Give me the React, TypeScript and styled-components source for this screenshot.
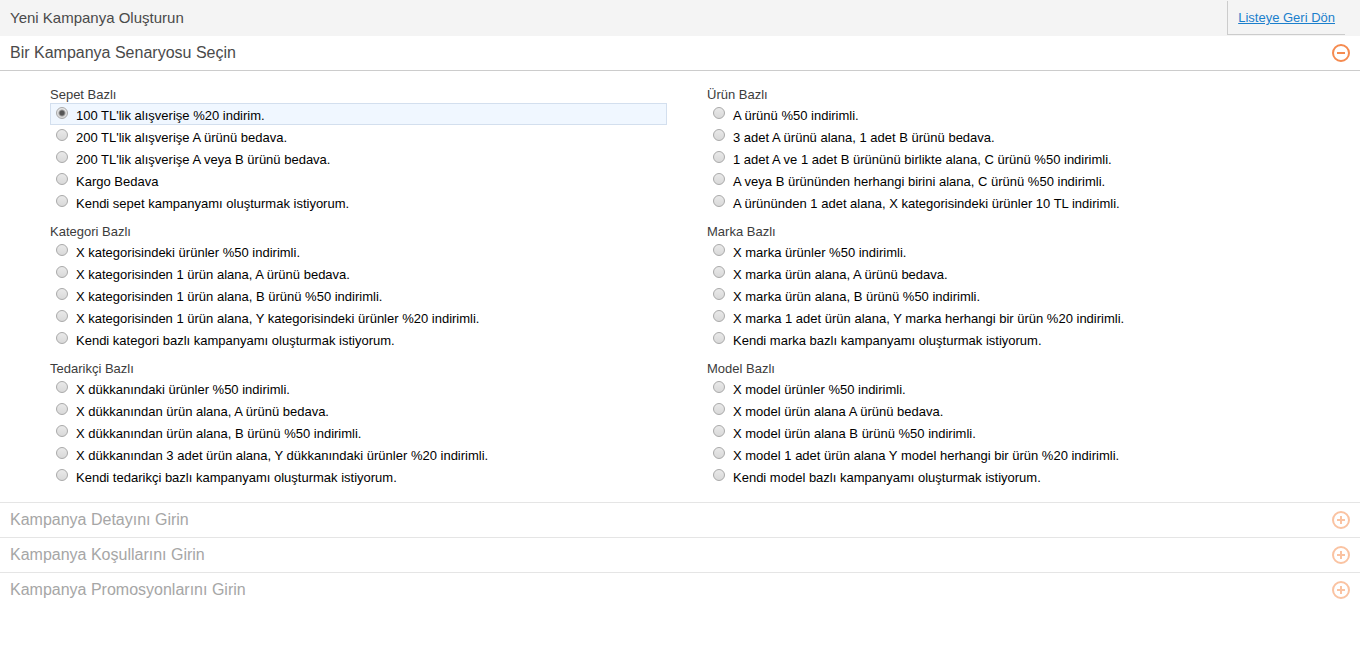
import React, { useState } from "react";
import styled, { createGlobalStyle } from "styled-components";

const GlobalStyle = createGlobalStyle`
  *, *::before, *::after { box-sizing: border-box; }
  body {
    margin: 0;
    background: #fff;
    color: #000;
    font-family: "Liberation Sans", Arial, sans-serif;
    font-size: 13px;
  }
`;

const TopBar = styled.header`
  display: flex;
  justify-content: space-between;
  align-items: flex-start;
  height: 36px;
  padding: 1px 15px 0 10px;
  background: #f4f4f4;
`;

const PageTitle = styled.h1`
  margin: 0;
  font-size: 15px;
  line-height: 34px;
  font-weight: normal;
  color: #4a4a4a;
`;

const BackBox = styled.div`
  height: 34px;
  padding: 0 10px;
  border-left: 1px solid #ccc;
  border-bottom: 1px solid #ccc;
`;

const BackLink = styled.a`
  font-size: 13px;
  line-height: 34px;
  color: #1b7fcc;
`;

const SectionHeader = styled.button<{ $open: boolean }>`
  display: flex;
  justify-content: space-between;
  align-items: center;
  width: 100%;
  height: 35px;
  padding: 0 10px;
  border: 0;
  border-bottom: ${(p) => (p.$open ? "1px solid #ccc" : "0")};
  border-top: ${(p) => (p.$open ? "0" : "1px solid #e5e5e5")};
  background: #fff;
  font-family: inherit;
  font-size: 16px;
  color: ${(p) => (p.$open ? "#4a4a4a" : "#a6a6a6")};
  text-align: left;
  cursor: pointer;
`;

const SectionTitle = styled.span`
  padding-bottom: 1px;
  line-height: 33px;
`;

const ToggleSvg = styled.svg<{ $open: boolean }>`
  flex: none;
  stroke: ${(p) => (p.$open ? "#f58b50" : "#fac3a2")};
`;

const Scenarios = styled.div`
  display: grid;
  grid-template-columns: 1fr 1fr;
  column-gap: 40px;
  padding: 5px 36px 15px 50px;
`;

const Group = styled.fieldset`
  min-width: 0;
  margin: 0;
  padding: 0;
  border: 0;
`;

const GroupTitle = styled.legend`
  padding: 10px 0 0;
  line-height: 17px;
  color: #3c3c3c;
`;

const Option = styled.label<{ $selected: boolean }>`
  display: flex;
  align-items: flex-start;
  gap: 8px;
  height: 22px;
  padding: 3px 5px 0;
  border: 1px solid ${(p) => (p.$selected ? "#d3dfee" : "transparent")};
  background: ${(p) => (p.$selected ? "#f0f7ff" : "transparent")};
  line-height: 18px;
  white-space: nowrap;
  cursor: pointer;
`;

const Radio = styled.input`
  appearance: none;
  flex: none;
  width: 12px;
  height: 12px;
  margin: 0;
  border: 1px solid #a9a9a9;
  border-radius: 50%;
  background: linear-gradient(#e9e9e9, #d9d9d9);

  &:checked {
    background: radial-gradient(circle, #555 0 2px, transparent 4px),
      linear-gradient(#e9e9e9, #d9d9d9);
  }
`;

const groups = [
  {
    title: "Sepet Bazlı",
    options: [
      "100 TL'lik alışverişe %20 indirim.",
      "200 TL'lik alışverişe A ürünü bedava.",
      "200 TL'lik alışverişe A veya B ürünü bedava.",
      "Kargo Bedava",
      "Kendi sepet kampanyamı oluşturmak istiyorum.",
    ],
  },
  {
    title: "Ürün Bazlı",
    options: [
      "A ürünü %50 indirimli.",
      "3 adet A ürünü alana, 1 adet B ürünü bedava.",
      "1 adet A ve 1 adet B ürününü birlikte alana, C ürünü %50 indirimli.",
      "A veya B ürününden herhangi birini alana, C ürünü %50 indirimli.",
      "A ürününden 1 adet alana, X kategorisindeki ürünler 10 TL indirimli.",
    ],
  },
  {
    title: "Kategori Bazlı",
    options: [
      "X kategorisindeki ürünler %50 indirimli.",
      "X kategorisinden 1 ürün alana, A ürünü bedava.",
      "X kategorisinden 1 ürün alana, B ürünü %50 indirimli.",
      "X kategorisinden 1 ürün alana, Y kategorisindeki ürünler %20 indirimli.",
      "Kendi kategori bazlı kampanyamı oluşturmak istiyorum.",
    ],
  },
  {
    title: "Marka Bazlı",
    options: [
      "X marka ürünler %50 indirimli.",
      "X marka ürün alana, A ürünü bedava.",
      "X marka ürün alana, B ürünü %50 indirimli.",
      "X marka 1 adet ürün alana, Y marka herhangi bir ürün %20 indirimli.",
      "Kendi marka bazlı kampanyamı oluşturmak istiyorum.",
    ],
  },
  {
    title: "Tedarikçi Bazlı",
    options: [
      "X dükkanındaki ürünler %50 indirimli.",
      "X dükkanından ürün alana, A ürünü bedava.",
      "X dükkanından ürün alana, B ürünü %50 indirimli.",
      "X dükkanından 3 adet ürün alana, Y dükkanındaki ürünler %20 indirimli.",
      "Kendi tedarikçi bazlı kampanyamı oluşturmak istiyorum.",
    ],
  },
  {
    title: "Model Bazlı",
    options: [
      "X model ürünler %50 indirimli.",
      "X model ürün alana A ürünü bedava.",
      "X model ürün alana B ürünü %50 indirimli.",
      "X model 1 adet ürün alana Y model herhangi bir ürün %20 indirimli.",
      "Kendi model bazlı kampanyamı oluşturmak istiyorum.",
    ],
  },
];

const closedSections = [
  "Kampanya Detayını Girin",
  "Kampanya Koşullarını Girin",
  "Kampanya Promosyonlarını Girin",
];

function ToggleIcon({ open }: { open: boolean }) {
  return (
    <ToggleSvg $open={open} width="18" height="18" viewBox="0 0 18 18" fill="none" strokeWidth="2" aria-hidden="true">
      <circle cx="9" cy="9" r="8" />
      <path d={open ? "M5 9h8" : "M5 9h8M9 5v8"} />
    </ToggleSvg>
  );
}

export default function App() {
  const [selected, setSelected] = useState("0-0");
  return (
    <>
      <GlobalStyle />
      <TopBar>
        <PageTitle>Yeni Kampanya Oluşturun</PageTitle>
        <BackBox>
          <BackLink href="#">Listeye Geri Dön</BackLink>
        </BackBox>
      </TopBar>
      <main>
        <SectionHeader type="button" $open aria-expanded="true">
          <SectionTitle>Bir Kampanya Senaryosu Seçin</SectionTitle>
          <ToggleIcon open />
        </SectionHeader>
        <Scenarios>
          {groups.map((group, g) => (
            <Group key={group.title}>
              <GroupTitle>{group.title}</GroupTitle>
              {group.options.map((text, i) => {
                const id = `${g}-${i}`;
                return (
                  <Option key={id} $selected={selected === id}>
                    <Radio
                      type="radio"
                      name="scenario"
                      value={id}
                      checked={selected === id}
                      onChange={() => setSelected(id)}
                    />
                    <span>{text}</span>
                  </Option>
                );
              })}
            </Group>
          ))}
        </Scenarios>
        {closedSections.map((title) => (
          <SectionHeader key={title} type="button" $open={false} aria-expanded="false">
            <SectionTitle>{title}</SectionTitle>
            <ToggleIcon open={false} />
          </SectionHeader>
        ))}
      </main>
    </>
  );
}
